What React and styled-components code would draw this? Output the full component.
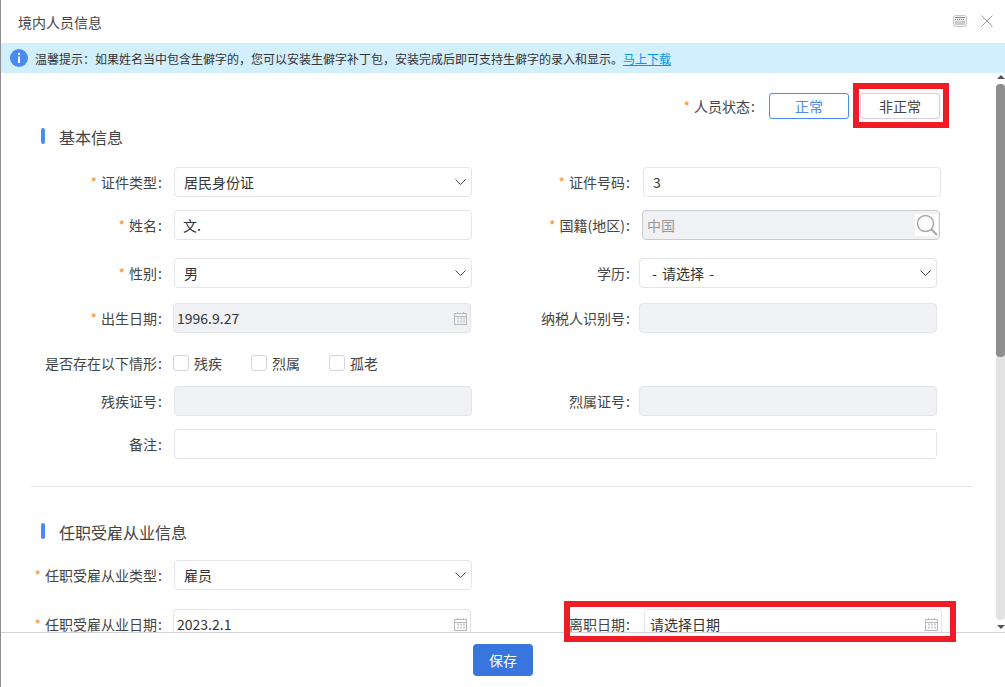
import React from "react";
import styled, { createGlobalStyle } from "styled-components";

const GlobalStyle = createGlobalStyle`
  html, body {
    margin: 0;
    padding: 0;
    background: #fff;
  }
  body {
    font-family: "Noto Sans CJK SC", "Liberation Sans", sans-serif;
    font-size: 14px;
    color: #444;
  }
  * {
    box-sizing: border-box;
  }
`;

const Dialog = styled.div`
  position: relative;
  width: 1005px;
  height: 687px;
  display: flex;
  flex-direction: column;
  overflow: hidden;
  border-left: 1px solid #8f8f8f;
  background: #fff;
`;

const Header = styled.header`
  flex: 0 0 43px;
  display: flex;
  align-items: center;
  padding: 0 12px 0 17px;
`;

const Title = styled.h1`
  flex: 1;
  margin: 0;
  font-size: 14px;
  font-weight: 400;
  line-height: 20px;
  color: #444;
`;

const HeaderIcons = styled.div`
  display: flex;
  align-items: center;
  gap: 14px;
  margin-top: -2px;
`;

const Notice = styled.div`
  flex: 0 0 30px;
  display: flex;
  align-items: center;
  gap: 7px;
  padding-left: 9px;
  background: #d1effc;
  font-size: 12px;
  color: #333;
`;

const NoticeLink = styled.a`
  color: #0a94e8;
  text-decoration: underline;
`;

const Body = styled.div`
  flex: 1;
  min-height: 0;
  display: flex;
`;

const Content = styled.main`
  flex: 1;
  min-width: 0;
  overflow: hidden;
`;

const Scrollbar = styled.div`
  flex: 0 0 9px;
  display: flex;
  flex-direction: column;
  align-items: center;
  padding: 2px 0 3px;
`;

const Arrow = styled.span`
  flex: none;
  width: 0;
  height: 0;
  border-left: 4px solid transparent;
  border-right: 4px solid transparent;
  border-${({ $down }) => ($down ? "top" : "bottom")}: 4px solid #555;
`;

const Track = styled.div`
  flex: 1;
  width: 9px;
  margin: 5px 0;
  border-radius: 4px;
  background: #e3e3e3;
`;

const Thumb = styled.div`
  height: 273px;
  border-radius: 4px;
  background: #8e8e8e;
`;

const Footer = styled.footer`
  flex: 0 0 55px;
  display: flex;
  justify-content: center;
  padding-top: 11px;
  border-top: 1px solid #d2d2da;
`;

const SaveButton = styled.button`
  width: 60px;
  height: 32px;
  border: 0;
  border-radius: 4px;
  background: #3875dc;
  color: #fff;
  font: inherit;
`;

const StatusRow = styled.div`
  display: flex;
  justify-content: flex-end;
  align-items: center;
  gap: 11px;
  height: 26px;
  margin-top: 20px;
  padding-right: 56px;
`;

const StatusLabel = styled.span`
  margin-right: 2px;
  color: #444;
`;

const StatusButton = styled.button`
  width: 80px;
  height: 26px;
  padding: 0;
  border: 1px solid ${({ $active }) => ($active ? "#4a8af4" : "#d0d0d8")};
  border-radius: 3px;
  background: #fff;
  color: ${({ $active }) => ($active ? "#4a8af4" : "#444")};
  font: inherit;
`;

const Marked = styled.div`
  position: relative;
`;

const ButtonMark = styled.span`
  position: absolute;
  left: -7px;
  top: -10px;
  width: 96px;
  height: 45px;
  border: 6px solid #ee1c25;
  pointer-events: none;
`;

const DateMark = styled.span`
  position: absolute;
  left: 563px;
  top: 601px;
  width: 392px;
  height: 41px;
  border: 6px solid #ee1c25;
  pointer-events: none;
`;

const Section = styled.h2`
  display: flex;
  align-items: flex-start;
  gap: 14px;
  height: 16px;
  margin: ${({ $top }) => $top}px 0 0 40px;
  font-size: 16px;
  font-weight: 400;
  line-height: 18px;
  color: #444;

  &::before {
    content: "";
    width: 4px;
    height: 16px;
    border-radius: 2px;
    background: #4a8af4;
  }
`;

const Row = styled.div`
  display: flex;
  align-items: center;
  height: ${({ $height }) => $height || 30}px;
  margin-top: ${({ $top }) => $top}px;
`;

const Field = styled.div`
  display: flex;
  align-items: center;
  flex: ${({ $width }) => ($width ? `0 0 ${$width}px` : "0 0 auto")};
`;

const LabelText = styled.label`
  flex: none;
  width: ${({ $width }) => $width}px;
  margin-right: ${({ $gap }) => $gap}px;
  text-align: right;
  white-space: nowrap;
  line-height: 16px;
  color: #444;
`;

const Star = styled.span`
  margin-right: 4px;
  color: #f7941d;
`;

const Colon = styled.span`
  display: inline-block;
  width: 6px;
  text-align: center;
`;

const Box = styled.div`
  flex: ${({ $width }) => `0 0 ${$width}px`};
  height: 30px;
  display: flex;
  align-items: center;
  padding: 0 ${({ $right }) => $right ?? 5}px 0 ${({ $left }) => $left}px;
  border: 1px solid ${({ $strong }) => ($strong ? "#c9c9ce" : "#e4e4ea")};
  border-radius: 4px;
  background: ${({ $disabled }) => ($disabled ? "#f0f1f5" : "#fff")};
  color: ${({ $muted }) => ($muted ? "#999" : "#333")};
  line-height: 16px;
  white-space: nowrap;
  overflow: hidden;
`;

const BoxText = styled.span`
  flex: 1;
  word-spacing: 2px;
`;

const SearchSlot = styled.span`
  display: flex;
  align-items: center;
  justify-content: center;
  width: 23px;
  height: 22px;
  background: #fff;
`;

const Divider = styled.hr`
  width: 941px;
  height: 1px;
  margin: 27px 0 0 30px;
  border: 0;
  background: #e4e4e8;
`;

const CheckGroup = styled.div`
  display: flex;
  align-items: center;
`;

const CheckItem = styled.label`
  display: flex;
  align-items: center;
  gap: 5px;
  margin-right: 29px;
  color: #444;
`;

const CheckMark = styled.span`
  width: 16px;
  height: 16px;
  border: 1px solid #d4d4da;
  border-radius: 3px;
  background: #fff;
`;

function Chevron() {
  return (
    <svg width="11" height="6" viewBox="0 0 11 6" fill="none" stroke="#444" strokeWidth="1">
      <path d="M.5.5l5 5 5-5" />
    </svg>
  );
}

function CalendarIcon() {
  return (
    <svg width="13" height="13" viewBox="0 0 13 13" fill="none" stroke="#b8b8b8" strokeWidth="1">
      <rect x=".5" y="1.5" width="12" height="11" />
      <path d="M.5 4.5h12M3.5 0v2M9.5 0v2" />
      <path d="M3 6.5h2M6 6.5h2M9 6.5h2M3 9.5h2M6 9.5h2M9 9.5h2" strokeWidth="2" stroke="#cfcfcf" />
    </svg>
  );
}

function SearchIcon() {
  return (
    <svg width="22" height="22" viewBox="0 0 22 22" fill="none" stroke="#a8a8a8" strokeWidth="1.5">
      <circle cx="9.5" cy="9.5" r="8" />
      <path d="M15 15l6 6" strokeWidth="2" />
    </svg>
  );
}

function InfoIcon() {
  return (
    <svg width="18" height="18" viewBox="0 0 18 18">
      <circle cx="9" cy="9" r="9" fill="#4a8af4" />
      <rect x="8" y="4" width="2" height="2" fill="#fff" />
      <rect x="8" y="7.5" width="2" height="6.5" fill="#fff" />
    </svg>
  );
}

function WindowIcon() {
  return (
    <svg width="14" height="12" viewBox="0 0 14 12" fill="none">
      <rect x=".5" y=".5" width="13" height="11" rx="2" stroke="#c8c8c8" fill="#f4f4f4" />
      <rect x="2" y="2" width="10" height="1" fill="#8a8a8a" />
      <path d="M2 4.5h10" stroke="#8a8a8a" strokeDasharray="1 1" />
      <rect x="2" y="6" width="10" height="4" fill="#cccccc" />
    </svg>
  );
}

function CloseIcon() {
  return (
    <svg width="12" height="12" viewBox="0 0 12 12" fill="none" stroke="#999" strokeWidth="1">
      <path d="M.5.5l11 11M11.5.5l-11 11" />
    </svg>
  );
}

function Label({ width = 162, gap = 11, required, children }) {
  return (
    <LabelText $width={width} $gap={gap}>
      {required && <Star>*</Star>}
      {children}
      <Colon>:</Colon>
    </LabelText>
  );
}

function Check({ children }) {
  return (
    <CheckItem>
      <CheckMark />
      {children}
    </CheckItem>
  );
}

function App() {
  return (
    <Dialog>
      <GlobalStyle />
      <Header>
        <Title>境内人员信息</Title>
        <HeaderIcons>
          <WindowIcon />
          <CloseIcon />
        </HeaderIcons>
      </Header>
      <Notice>
        <InfoIcon />
        <span>
          温馨提示：如果姓名当中包含生僻字的，您可以安装生僻字补丁包，安装完成后即可支持生僻字的录入和显示。
          <NoticeLink>马上下载</NoticeLink>
        </span>
      </Notice>
      <Body>
        <Content>
          <StatusRow>
            <StatusLabel>
              <Star>*</Star>人员状态
              <Colon>:</Colon>
            </StatusLabel>
            <StatusButton $active>正常</StatusButton>
            <Marked>
              <StatusButton>非正常</StatusButton>
              <ButtonMark />
            </Marked>
          </StatusRow>

          <Section $top={9}>基本信息</Section>

          <Row $top={23}>
            <Field $width={471}>
              <Label required>证件类型</Label>
              <Box $width={298} $left={9} $right={5}>
                <BoxText>居民身份证</BoxText>
                <Chevron />
              </Box>
            </Field>
            <Field>
              <Label width={159} gap={12} required>证件号码</Label>
              <Box $width={298} $left={9}>3</Box>
            </Field>
          </Row>

          <Row $top={13}>
            <Field $width={471}>
              <Label required>姓名</Label>
              <Box $width={298} $left={8}>文.</Box>
            </Field>
            <Field>
              <Label width={159} gap={11} required>国籍(地区)</Label>
              <Box $width={298} $left={4} $right={1} $disabled $muted $strong>
                <BoxText>中国</BoxText>
                <SearchSlot>
                  <SearchIcon />
                </SearchSlot>
              </Box>
            </Field>
          </Row>

          <Row $top={18}>
            <Field $width={471}>
              <Label required>性别</Label>
              <Box $width={298} $left={9} $right={5}>
                <BoxText>男</BoxText>
                <Chevron />
              </Box>
            </Field>
            <Field>
              <Label width={159} gap={8}>学历</Label>
              <Box $width={298} $left={12} $right={5}>
                <BoxText>- 请选择 -</BoxText>
                <Chevron />
              </Box>
            </Field>
          </Row>

          <Row $top={15}>
            <Field $width={471}>
              <Label gap={10} required>出生日期</Label>
              <Box $width={298} $left={3} $right={3} $disabled>
                <BoxText>1996.9.27</BoxText>
                <CalendarIcon />
              </Box>
            </Field>
            <Field>
              <Label width={159} gap={8}>纳税人识别号</Label>
              <Box $width={298} $disabled />
            </Field>
          </Row>

          <Row $top={22} $height={16}>
            <Field>
              <Label gap={10}>是否存在以下情形</Label>
              <CheckGroup>
                <Check>残疾</Check>
                <Check>烈属</Check>
                <Check>孤老</Check>
              </CheckGroup>
            </Field>
          </Row>

          <Row $top={15}>
            <Field $width={471}>
              <Label>残疾证号</Label>
              <Box $width={298} $disabled />
            </Field>
            <Field>
              <Label width={159} gap={8}>烈属证号</Label>
              <Box $width={298} $disabled />
            </Field>
          </Row>

          <Row $top={13}>
            <Field>
              <Label>备注</Label>
              <Box $width={763} />
            </Field>
          </Row>

          <Divider />

          <Section $top={36}>任职受雇从业信息</Section>

          <Row $top={21}>
            <Field $width={471}>
              <Label required>任职受雇从业类型</Label>
              <Box $width={298} $left={9} $right={5}>
                <BoxText>雇员</BoxText>
                <Chevron />
              </Box>
            </Field>
          </Row>

          <Row $top={19}>
            <Field $width={471}>
              <Label gap={10} required>任职受雇从业日期</Label>
              <Box $width={298} $left={3} $right={3}>
                <BoxText>2023.2.1</BoxText>
                <CalendarIcon />
              </Box>
            </Field>
            <Field>
              <Label width={159} gap={13}>离职日期</Label>
              <Box $width={298} $left={5} $right={3}>
                <BoxText>请选择日期</BoxText>
                <CalendarIcon />
              </Box>
            </Field>
          </Row>
        </Content>
        <Scrollbar>
          <Arrow />
          <Track>
            <Thumb />
          </Track>
          <Arrow $down />
        </Scrollbar>
      </Body>
      <Footer>
        <SaveButton>保存</SaveButton>
      </Footer>
      <DateMark />
    </Dialog>
  );
}

export default App;
